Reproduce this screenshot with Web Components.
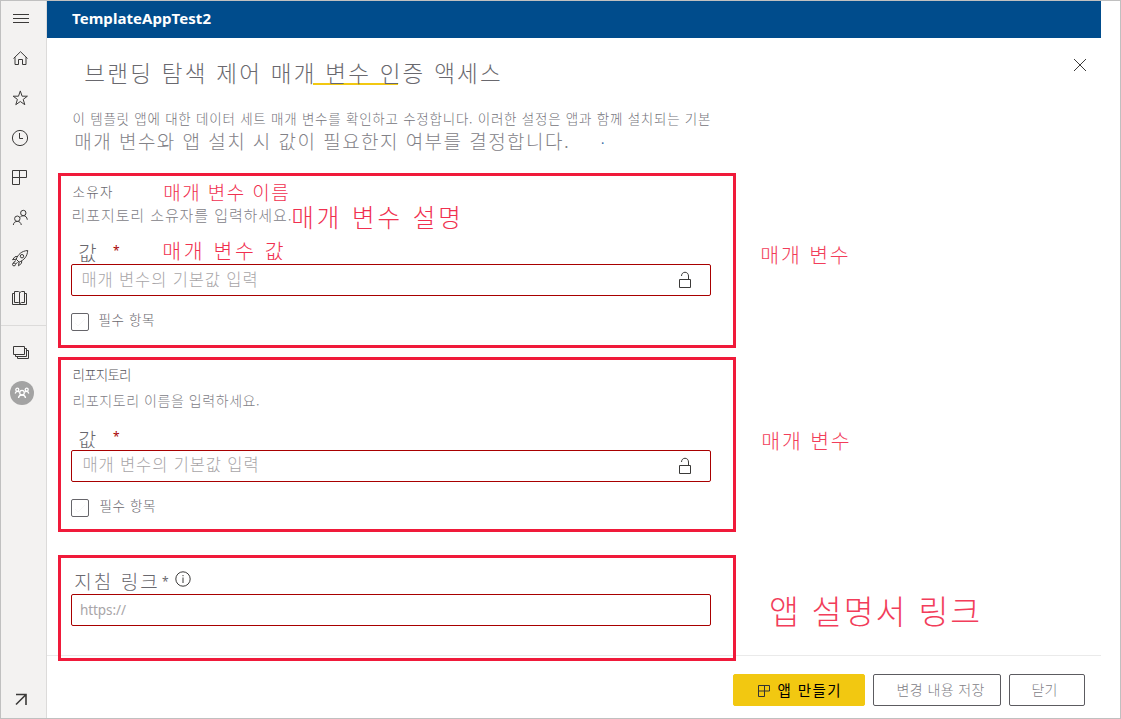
<!DOCTYPE html>
<html lang="ko">
<head>
<meta charset="utf-8">
<title>TemplateAppTest2</title>
<style>
body{margin:0;background:#fff;font-family:"Noto Sans CJK KR","Noto Sans",sans-serif;color:#69686e}
</style>
</head>
<body>
<app-shell></app-shell>
<script>
const define = (name, html, setup) => {
  const tpl = document.createElement('template');
  tpl.innerHTML = html;
  customElements.define(name, class extends HTMLElement {
    connectedCallback() {
      if (this.shadowRoot) return;
      this.attachShadow({mode: 'open'}).append(tpl.content.cloneNode(true));
      if (setup) setup.call(this, this.shadowRoot);
    }
  });
};

/* One line of text, letter-spaced to fill the width w. gap: left margin, dy: vertical nudge. */
define('ui-text', `<style>
:host{display:block;flex:none;white-space:pre;line-height:1.4;font-weight:300}
span{display:inline-block;vertical-align:top}
</style><span></span>`, function (root) {
  const at = n => this.getAttribute(n);
  const s = root.querySelector('span'), size = +at('size'), w = +at('w'), t = at('text');
  this.style.fontSize = size + 'px';
  if (at('gap')) this.style.marginLeft = at('gap') + 'px';
  if (at('dy')) this.style.marginTop = 2 * at('dy') + 'px';
  if (at('color')) this.style.color = at('color');
  if (at('weight')) this.style.fontWeight = at('weight');
  if (at('font')) this.style.fontFamily = `"${at('font')}",sans-serif`;
  s.textContent = t;
  if (w) {
    const bleed = at('font') ? 0 : size * .07;
    s.style.letterSpacing = t.length > 1 ? (w + bleed - s.getBoundingClientRect().width) / (t.length - 1) + 'px' : '0';
    s.style.marginLeft = -bleed / 2 + 'px';
    this.style.width = w + 'px';
  }
});

/* Horizontal strip of height h, preceded by space top. */
define('ui-row', `<style>:host{display:flex;align-items:center;box-sizing:border-box}</style><slot></slot>`, function () {
  this.style.height = this.getAttribute('h') + 'px';
  this.style.marginTop = (this.getAttribute('top') || 0) + 'px';
});

const ICONS = {
  menu: [18, 18, '<path d="M2 5.500h16M2 9.500h16M2 13.500h16"/>'],
  home: [18, 18, '<path d="M2.500 9.500 9.500 2.700l7 6.800M4 8.200v7.300h3.500v-5h4v5H15V8.200"/>'],
  star: [18, 18, '<path d="m9.300 1.900 1.800 5.300h5.300l-4.200 3.200 1.600 5.300-4.500-3.200-4.500 3.200 1.600-5.300-4.200-3.200h5.300z"/>'],
  clock: [18, 18, '<circle cx="9" cy="9" r="7.600"/><path d="M8.500 4v5.500H12"/>'],
  apps: [18, 18, '<path d="M1.500 1.500h14v7h-7v7h-7zM8.500 1.500v7M1.500 8.500h7"/>'],
  people: [18, 18, '<circle cx="12.300" cy="4" r="2.700"/><circle cx="6.300" cy="9.700" r="2.700"/><path d="M2.300 16c.3-2.400 1.800-3.600 4-3.600s3.600 1.200 4 3.600M9.300 8c.8-.8 1.800-1.300 3-1.300 2.300 0 3.700 1.500 4 4"/>'],
  rocket: [18, 18, '<path d="M5.200 10.200C7 5.500 10.500 2 16.700 1.500c-.4 6-3.700 9.700-8.600 11.600zM6.500 7.500 4 7.700l-2.500 3 3.700-.5M10.700 11.800l-.2 2.500-3 2.500.6-3.700M5 11.800c-1.300.1-2.300.9-2.500 2.800M6.500 13.200l-1.800 1.900"/><circle cx="11" cy="7.200" r="1.700"/><circle cx="3" cy="15.400" r="1.500"/>'],
  book: [18, 18, '<path d="M3.500 2.500h4l1.500 1 1.500-1h3v11h-3l-1.500 1-1.500-1h-4zM8.500 3.500v11M3.500 4.500h-2v11h14v-11h-2"/>'],
  stack: [18, 18, '<path d="M2.500 2.500h11v8h-11zM13.500 4.500h2v8h-11v-2M15.500 6.500h2v8h-11v-2"/>'],
  out: [18, 18, '<path d="M5 4.500h10V15M14.800 4.700 5 14.500" stroke-width="1.600"/>'],
  close: [14, 14, '<path d="m1 1 12 12M13 1 1 13"/>'],
  lock: [14, 18, '<path d="M1.500 8.500h11v8h-11zM3.500 5c0-5 7-5 7 0v3.500"/>'],
  info: [16, 16, '<circle cx="8" cy="8" r="7.200"/><path d="M8 6.500V12M8 4v1.200"/>'],
  tile: [12, 12, '<path d="M.5.500h11v5.500H6.500v5.500h-6zM6.500.5V6M.5 6h6"/>'],
  team: [24, 24, '<g stroke="#fff" stroke-width="1.300"><circle cx="12" cy="11.700" r="2.300"/><circle cx="7.300" cy="8.700" r="1.500"/><circle cx="16.700" cy="8.700" r="1.500"/><path d="M8.500 17c.2-1.900 1.500-3 3.500-3s3.300 1.100 3.500 3M5.200 12.500c.3-1.500 1-2.200 2.100-2.200.9 0 1.500.3 2 .8M18.800 12.500c-.3-1.500-1-2.200-2.100-2.200-.9 0-1.500.3-2 .8"/></g>']
};
define('ui-icon', `<style>:host{display:block;flex:none;color:#3b3a39}svg{display:block;fill:none;stroke:currentColor;overflow:visible}</style><div></div>`, function (root) {
  const [w, h, d] = ICONS[this.getAttribute('name')];
  root.querySelector('div').innerHTML = `<svg width="${w}" height="${h}" viewBox="0 0 ${w} ${h}">${d}</svg>`;
});

define('side-nav', `<style>
:host{display:flex;flex-direction:column;box-sizing:border-box;width:46px;height:717px;background:#f3f2f1;border-right:1px solid #dcdbda;padding:8px 0 10px}
nav{display:flex;flex-direction:column;gap:22px;padding-left:10px}
hr{width:100%;box-sizing:border-box;margin:18px 0 18px;border:0;border-top:1px solid #dcdbda}
.avatar{margin:19px 0 0 9px;width:24px;height:24px;border-radius:50%;background:#a3a3a3}
.bottom{margin:auto 0 0 10px}
</style>
<nav><ui-icon name="menu"></ui-icon><ui-icon name="home"></ui-icon><ui-icon name="star"></ui-icon><ui-icon name="clock"></ui-icon><ui-icon name="apps"></ui-icon><ui-icon name="people"></ui-icon><ui-icon name="rocket"></ui-icon><ui-icon name="book"></ui-icon></nav>
<hr><nav><ui-icon name="stack"></ui-icon></nav>
<div class="avatar"><ui-icon name="team"></ui-icon></div>
<ui-icon class="bottom" name="out"></ui-icon>`);

define('app-header', `<style>:host{display:flex;align-items:center;height:37px;margin-right:19px;background:#004c8c;color:#fff}</style>
<ui-text gap="25" dy="-1" size="15" w="139" weight="700" font="Noto Sans" text="TemplateAppTest2"></ui-text>`);

define('text-field', `<style>:host{display:flex;align-items:center;box-sizing:border-box;width:640px;height:32px;margin-left:10px;border:1px solid #a80000;border-radius:2px;background:#fff;color:#a8a5a8}
.end{margin-left:auto;padding-right:18px}</style><slot></slot><div class="end"><slot name="end"></slot></div>`);

define('check-box', `<style>:host{display:block;flex:none;box-sizing:border-box;width:18px;height:18px;margin-left:10px;border:1px solid #66656a;border-radius:2px;background:#fff}
svg{display:block;fill:none;stroke:#f6f6f6}</style><svg width="16" height="16"><path d="m3 9 3 3 7-7"/></svg>`);

/* Highlighted frame with an outside caption to its right. */
define('marked-group', `<style>
:host{display:flex;align-items:flex-start;margin-left:11px}
section{box-sizing:border-box;width:678px;border:3px solid #f01a3a}
aside{color:#f23d5a;display:flex}
</style><section><slot></slot></section><aside><slot name="note"></slot></aside>`, function (root) {
  root.querySelector('section').style.height = this.getAttribute('h') + 'px';
});

define('tab-title', `<style>
:host{display:block}
.bar{height:2px;width:85px;margin:0 0 0 266px;background:#f2c811}
</style>
<ui-row h="45"><ui-text gap="38" dy="12.500" size="22.500" w="415" text="브랜딩 탐색 제어 매개 변수 인증 액세스"></ui-text><ui-icon style="margin:8px 0 0 573px" name="close"></ui-icon></ui-row>
<div class="bar"></div>`);

define('setup-form', `<style>
:host{display:block;height:617px}
.red{color:#f0304f}
</style>
<tab-title></tab-title>
<ui-row h="22" top="22"><ui-text gap="26" size="13.500" w="637" color="#74737a" text="이 템플릿 앱에 대한 데이터 세트 매개 변수를 확인하고 수정합니다. 이러한 설정은 앱과 함께 설치되는 기본"></ui-text></ui-row>
<ui-row h="24"><ui-text gap="28" dy="0.500" size="19" w="493" color="#828187" text="매개 변수와 앱 설치 시 값이 필요한지 여부를 결정합니다."></ui-text><ui-text gap="33" dy="-2" size="12" color="#1f66a0" weight="400" text="."></ui-text></ui-row>

<marked-group h="175" style="margin-top:20px">
  <ui-row h="24" top="4"><ui-text gap="12" dy="-0.500" size="13.500" w="39" text="소유자"></ui-text><ui-text class="red" gap="52" dy="0.500" size="19" w="124" text="매개 변수 이름"></ui-text></ui-row>
  <ui-row h="24"><ui-text gap="11" dy="-2" size="15" w="219" color="#828187" text="리포지토리 소유자를 입력하세요."></ui-text><ui-text class="red" gap="1" dy="1.500" size="24.500" w="168" text="매개 변수 설명"></ui-text></ui-row>
  <ui-row h="24" top="12"><ui-text gap="18" dy="0.500" size="20" w="18" text="값"></ui-text><ui-text gap="16" dy="-0.500" size="12" w="6" font="Noto Sans" weight="400" color="#a80000" text="*"></ui-text><ui-text class="red" gap="44" dy="-1.500" size="20.500" w="120" text="매개 변수 값"></ui-text></ui-row>
  <text-field><ui-text gap="10" dy="0" size="16.500" w="175" text="매개 변수의 기본값 입력"></ui-text><ui-icon slot="end" name="lock"></ui-icon></text-field>
  <ui-row h="18" top="17"><check-box></check-box><ui-text gap="10" dy="-2.500" size="13.500" w="55" text="필수 항목"></ui-text></ui-row>
  <ui-text slot="note" style="padding-top:67px" gap="25" size="20.500" w="87" text="매개 변수"></ui-text>
</marked-group>

<marked-group h="175" style="margin-top:9px">
  <ui-row h="24" top="3"><ui-text gap="12" dy="-0.500" size="13.500" w="58" color="#57565b" text="리포지토리"></ui-text></ui-row>
  <ui-row h="24" top="2"><ui-text gap="12" size="14" w="186" color="#828187" text="리포지토리 이름을 입력하세요."></ui-text></ui-row>
  <ui-row h="24" top="13"><ui-text gap="18" dy="0.500" size="19.500" w="17" text="값"></ui-text><ui-text gap="17" dy="-0.500" size="12" w="6" font="Noto Sans" weight="400" color="#a80000" text="*"></ui-text></ui-row>
  <text-field><ui-text gap="11" dy="-1" size="16.500" w="175" text="매개 변수의 기본값 입력"></ui-text><ui-icon slot="end" name="lock"></ui-icon></text-field>
  <ui-row h="18" top="17"><check-box></check-box><ui-text gap="11" dy="-2.500" size="13.500" w="55" text="필수 항목"></ui-text></ui-row>
  <ui-text slot="note" style="padding-top:69px" gap="26" size="20.500" w="87" text="매개 변수"></ui-text>
</marked-group>

<marked-group h="106" style="margin-top:23px">
  <ui-row h="24" top="12"><ui-text gap="14" dy="-0.500" size="19" w="82" text="지침 링크"></ui-text><ui-text gap="5" size="12" w="6" font="Noto Sans" weight="400" text="*"></ui-text><ui-icon style="margin:-7px 0 0 7px" name="info"></ui-icon></ui-row>
  <text-field><ui-text gap="8" size="13.500" w="46" font="Noto Sans" weight="400" text="https://"></ui-text></text-field>
  <ui-text slot="note" style="padding-top:32px" gap="34" size="32.500" w="209" text="앱 설명서 링크"></ui-text>
</marked-group>`);

define('ui-button', `<style>
:host{display:flex;align-items:center;box-sizing:border-box;height:32px;border:1px solid #5c5b60;border-radius:2px;background:#fff;color:#828187}
:host([primary]){background:#f2c811;border-color:#f2c811;color:#000}
</style><slot></slot>`);

define('app-footer', `<style>
:host{display:flex;gap:8px;align-items:flex-start;box-sizing:border-box;height:63px;margin-right:19px;padding:18px 16px 0 0;justify-content:flex-end;border-top:1px solid #eaeaea}
</style>
<ui-button primary style="width:132px"><ui-icon style="margin:2px 0 0 24px;color:#333" name="tile"></ui-icon><ui-text gap="8" size="14.500" w="62" weight="400" text="앱 만들기"></ui-text></ui-button>
<ui-button style="width:128px"><ui-text gap="23" size="14" w="87" text="변경 내용 저장"></ui-text></ui-button>
<ui-button style="width:76px"><ui-text gap="22" size="14" w="25" text="닫기"></ui-text></ui-button>`);

define('app-shell', `<style>
:host{display:flex;box-sizing:border-box;width:1121px;height:719px;border:1px solid #c0c0c0;overflow:hidden}
main{flex:1;min-width:0}
</style><side-nav></side-nav><main><app-header></app-header><setup-form></setup-form><app-footer></app-footer></main>`);
</script>
</body>
</html>
